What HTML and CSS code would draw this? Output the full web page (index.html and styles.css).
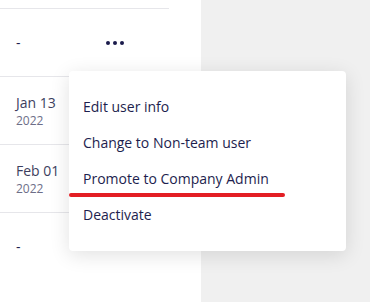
FILE: index.html
```html
<!DOCTYPE html>
<html lang="en">
<head>
  <meta charset="UTF-8" />
  <title>Users</title>
  <link rel="stylesheet" href="styles.css">
</head>
<body>
  <div class="page">
    <div class="tabla">
      <div class="fila fila-tope"></div>
      <div class="fila">
        <div class="celda-fecha">-</div>
        <div class="celda-acciones"><span class="punto"></span><span class="punto"></span><span class="punto"></span></div>
      </div>
      <div class="fila">
        <div class="celda-fecha">
          <div class="fecha">Jan 13</div>
          <div class="anio">2022</div>
        </div>
      </div>
      <div class="fila">
        <div class="celda-fecha">
          <div class="fecha">Feb 01</div>
          <div class="anio">2022</div>
        </div>
      </div>
      <div class="fila fila-ultima">
        <div class="celda-fecha">-</div>
      </div>
    </div>
    <div class="lateral"></div>
  </div>

  <!-- menu de acciones -->
  <div class="menu">
    <div class="menu-item">Edit user info</div>
    <div class="menu-item">Change to Non-team user</div>
    <div class="menu-item">Promote to Company Admin</div>
    <div class="menu-item">Deactivate</div>
  </div>
  <div class="subrayado"></div>
</body>
</html>
```

FILE: styles.css
```css
body {
  margin: 0;
  font-family: 'Open Sans', sans-serif;
  background: #f0f0f0;
  color: #1d1e4e;
}

.page {
  display: flex;
  height: 302px;
}

.tabla {
  width: 201px;
  background: #fff;
}

.lateral {
  flex: 1;
}

.fila {
  width: 169px;
  height: 67px;
  border-bottom: 1px solid #e6e6ea;
  display: flex;
  align-items: center;
}

.fila-tope {
  height: 8px;
}

.fila-ultima {
  border-bottom: none;
}

.celda-fecha {
  width: 90px;
  padding-left: 16px;
  font-size: 14px;
  line-height: 19px;
}

.fecha {
  color: #3d3e5e;
}

.anio {
  font-size: 12px;
  line-height: 17px;
  color: #6d6e88;
}

.celda-acciones {
  display: flex;
  gap: 3px;
}

.punto {
  width: 4px;
  height: 4px;
  border-radius: 50%;
  background: #1a1b4b;
}

.menu {
  position: absolute;
  left: 69px;
  top: 71px;
  width: 277px;
  box-sizing: border-box;
  padding: 18px 0 18px;
  background: #fff;
  border-radius: 4px;
  box-shadow: 0 4px 20px rgba(0, 0, 0, 0.12);
}

.menu-item {
  padding-left: 14px;
  font-size: 14px;
  line-height: 36px;
  color: #1d1e4e;
}

.subrayado {
  position: absolute;
  left: 69px;
  top: 193px;
  width: 216px;
  height: 4px;
  border-radius: 2px;
  background: #e31e24;
}
```
